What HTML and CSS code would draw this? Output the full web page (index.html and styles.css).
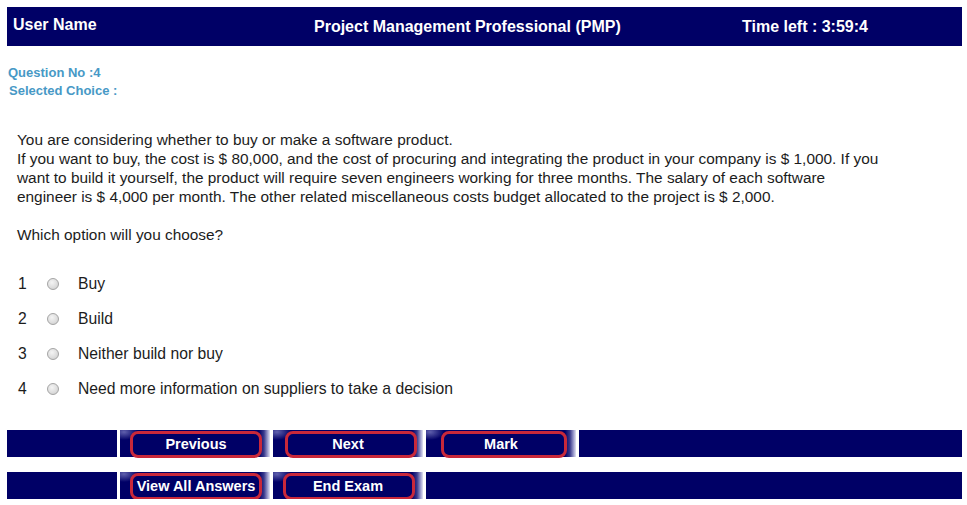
FILE: index.html
```html
<!DOCTYPE html>
<html>
<head>
<meta charset="utf-8">
<title>PMP Exam</title>
<link rel="stylesheet" href="styles.css">
</head>
<body>
<div class="page">
  <header class="topbar">
    <div class="user">User Name</div>
    <div class="title">Project Management Professional (PMP)</div>
    <div class="timer">Time left : 3:59:4</div>
  </header>

  <div class="info">
    <div class="qno">Question No :4</div>
    <div class="choice">Selected Choice :</div>
  </div>

  <div class="question">
    You are considering whether to buy or make a software product.<br>
    If you want to buy, the cost is $ 80,000, and the cost of procuring and integrating the product in your company is $ 1,000. If you want to build it yourself, the product will require seven engineers working for three months. The salary of each software engineer is $ 4,000 per month. The other related miscellaneous costs budget allocated to the project is $ 2,000.<br>
    <br>
    Which option will you choose?
  </div>

  <div class="options">
    <label class="opt"><span class="num">1</span><input type="radio" name="ans" class="radio"><span class="txt">Buy</span></label>
    <label class="opt"><span class="num">2</span><input type="radio" name="ans" class="radio"><span class="txt">Build</span></label>
    <label class="opt"><span class="num">3</span><input type="radio" name="ans" class="radio"><span class="txt">Neither build nor buy</span></label>
    <label class="opt"><span class="num">4</span><input type="radio" name="ans" class="radio"><span class="txt">Need more information on suppliers to take a decision</span></label>
  </div>

  <div class="navrow row1">
    <div class="cell first"></div>
    <div class="cell btncell"><button class="btn b-prev">Previous</button></div>
    <div class="cell btncell"><button class="btn b-next">Next</button></div>
    <div class="cell btncell"><button class="btn b-mark">Mark</button></div>
    <div class="cell fill"></div>
  </div>
  <div class="navrow row2">
    <div class="cell first"></div>
    <div class="cell btncell"><button class="btn b-view">View All Answers</button></div>
    <div class="cell btncell"><button class="btn b-end">End Exam</button></div>
    <div class="cell fill"></div>
  </div>
</div>
</body>
</html>
```

FILE: styles.css
```css
html, body {
  margin: 0;
  padding: 0;
  background: #ffffff;
}

.page {
  padding: 7px 5px 0 7px;
  width: 955px;
  font-family: "Liberation Sans", Arial, sans-serif;
}

.topbar {
  display: grid;
  grid-template-columns: 307px 428px 1fr;
  height: 39px;
  background: #000066;
  color: #ffffff;
  font-weight: bold;
  font-size: 16px;
  line-height: 19px;
}

.user {
  padding: 8px 0 0 6px;
}

.title {
  padding-top: 10px;
}

.timer {
  padding-top: 10px;
}

.info {
  margin-top: 18px;
  font-size: 13px;
  font-weight: bold;
  line-height: 18px;
  color: #4799c6;
}

.qno {
  padding-left: 1px;
}

.choice {
  padding-left: 2px;
}

.question {
  margin-top: 30px;
  margin-left: 10px;
  width: 866px;
  font-size: 15.4px;
  line-height: 19px;
  color: #1c1c1c;
}

.options {
  margin-top: 22px;
  margin-left: 10px;
  display: flex;
  flex-direction: column;
}

.opt {
  display: flex;
  align-items: center;
  height: 35px;
  font-size: 15.7px;
  color: #1c1c1c;
}

.num {
  width: 30px;
  padding-left: 1px;
  box-sizing: border-box;
}

.radio {
  appearance: none;
  -webkit-appearance: none;
  margin: 0;
  width: 12px;
  height: 12px;
  border-radius: 50%;
  border: 1px solid #a4a4a4;
  background: radial-gradient(circle at 40% 35%, #f4f4f4 0%, #dcdcdc 60%, #c8c8c8 100%);
  box-sizing: border-box;
  flex: none;
}

.txt {
  margin-left: 19px;
}

.navrow {
  display: flex;
  gap: 3px;
  height: 27px;
}

.row1 {
  margin-top: 24px;
}

.row2 {
  margin-top: 15px;
}

.cell {
  background: #000066;
  height: 27px;
}

.first {
  width: 110px;
}

.btncell {
  width: 150px;
  background:
    radial-gradient(ellipse 14px 8px at 4px 2px, rgba(120, 120, 190, 0.8), rgba(0, 0, 102, 0) 100%),
    linear-gradient(to right, #000066 0, #000066 calc(100% - 11px), #3a3a8c calc(100% - 6px), #a8a8d4 calc(100% - 2px), #e4e4f2 100%);
}

.fill {
  flex: 1;
}

.btn {
  display: block;
  margin-top: 1px;
  height: 27px;
  box-sizing: border-box;
  border: 3px solid #c9283a;
  border-radius: 8px;
  background: #000066;
  color: #ffffff;
  font-family: "Liberation Sans", Arial, sans-serif;
  font-weight: bold;
  font-size: 14.5px;
  line-height: 18px;
  padding: 0 0 1px 0;
  text-align: center;
  cursor: pointer;
}

.b-prev, .b-view {
  margin-left: 10px;
  width: 132px;
}

.b-next {
  margin-left: 12px;
  width: 132px;
  padding-right: 6px;
}

.b-end {
  margin-left: 10px;
  width: 132px;
  padding-right: 2px;
}

.b-mark {
  margin-left: 15px;
  width: 126px;
  padding-right: 6px;
}
```
